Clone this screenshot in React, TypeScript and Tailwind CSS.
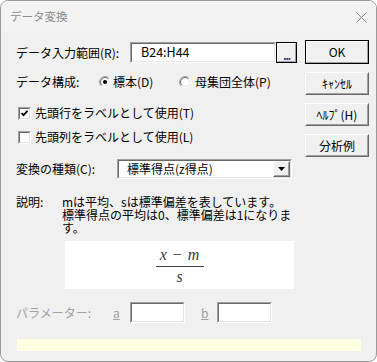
import React from "react";

const F = "font-['Noto_Sans_CJK_JP','Noto_Sans_CJK_SC',sans-serif]";

function Raised({
  children,
  className = "",
  isDefault = false,
}: {
  children?: React.ReactNode;
  className?: string;
  isDefault?: boolean;
}) {
  if (isDefault) {
    return (
      <div className={`border border-black ${className}`}>
        <div className="w-full h-full border-t border-l border-t-white border-l-white border-b border-r border-b-[#a0a0a0] border-r-[#a0a0a0] bg-[#f0f0f0] flex items-center justify-center">
          {children}
        </div>
      </div>
    );
  }
  return (
    <div
      className={`border-t border-l border-t-white border-l-white border-b border-r border-b-[#696969] border-r-[#696969] ${className}`}
    >
      <div className="w-full h-full border-t border-l border-t-[#f0f0f0] border-l-[#f0f0f0] border-b border-r border-b-[#a0a0a0] border-r-[#a0a0a0] bg-[#f0f0f0] flex items-center justify-center">
        {children}
      </div>
    </div>
  );
}

function Sunken({
  children,
  className = "",
}: {
  children?: React.ReactNode;
  className?: string;
}) {
  return (
    <div
      className={`border-t border-l border-t-[#a0a0a0] border-l-[#a0a0a0] border-b border-r border-b-white border-r-white ${className}`}
    >
      <div className="w-full h-full border-t border-l border-t-[#696969] border-l-[#696969] border-b border-r border-b-[#e3e3e3] border-r-[#e3e3e3] bg-white flex items-center">
        {children}
      </div>
    </div>
  );
}

function Radio({ checked }: { checked?: boolean }) {
  const a = (r: number) => {
    const d = r * 0.7071;
    return {
      tl: `M ${6 - d} ${6 + d} A ${r} ${r} 0 0 1 ${6 + d} ${6 - d}`,
      br: `M ${6 + d} ${6 - d} A ${r} ${r} 0 0 1 ${6 - d} ${6 + d}`,
    };
  };
  const o = a(5.5);
  const i = a(4.5);
  return (
    <svg width="12" height="12" viewBox="0 0 12 12" className="shrink-0">
      <circle cx="6" cy="6" r="4.5" fill="#ffffff" />
      <path d={o.tl} stroke="#a0a0a0" fill="none" strokeWidth="1" />
      <path d={o.br} stroke="#ffffff" fill="none" strokeWidth="1" />
      <path d={i.tl} stroke="#696969" fill="none" strokeWidth="1" />
      <path d={i.br} stroke="#e3e3e3" fill="none" strokeWidth="1" />
      {checked && <circle cx="6" cy="6" r="2" fill="#000" />}
    </svg>
  );
}

function Checkbox({ checked }: { checked?: boolean }) {
  return (
    <Sunken className="w-[13px] h-[13px] shrink-0">
      {checked && (
        <svg width="9" height="9" viewBox="0 0 9 9" className="block">
          <polyline
            points="1.5,4 3.5,6.2 7.5,1.8"
            fill="none"
            stroke="#000"
            strokeWidth="1.8"
          />
        </svg>
      )}
    </Sunken>
  );
}

export default function App() {
  return (
    <div className={`w-[377px] h-[362px] bg-white ${F} text-[12px] leading-none text-black`}>
      <div className="w-[377px] h-[362px] rounded-[8px] border border-[#9a9a9a] bg-[#f0f0f0] overflow-hidden flex flex-col">
        {/* title bar */}
        <div className="h-[31px] shrink-0 bg-[#f3f3f3] flex items-center justify-between pl-[9px] pr-[9px]">
          <span className="text-[11.5px] text-[#8a8a8a] mt-[1px]">データ変換</span>
          <svg width="11" height="11" viewBox="0 0 11 11" className="mt-[1px]">
            <path d="M0.5 0.5 L10.5 10.5 M10.5 0.5 L0.5 10.5" stroke="#7a7a7a" strokeWidth="0.9" />
          </svg>
        </div>

        {/* body */}
        <div className="flex-1 pl-[15px] pr-[7px] flex flex-col">
          <div className="flex items-start">
            {/* left column */}
            <div className="w-[282px] flex flex-col">
              <div className="mt-[10px] h-[21px] flex items-center">
                <span className="w-[114px]">データ入力範囲(R):</span>
                <Sunken className="w-[146px] h-[21px]">
                  <span className="pl-[9px] text-[12.5px]">B24:H44</span>
                </Sunken>
                <Raised isDefault className="w-[21px] h-[21px]">
                  <span className="text-[10px] text-[#1a1a6e] mt-[6px] tracking-[-1px] font-bold">...</span>
                </Raised>
              </div>

              <div className="mt-[9px] h-[20px] flex items-center">
                <span className="w-[83px]">データ構成:</span>
                <div className="w-[80px] flex items-center">
                  <Radio checked />
                  <span className="ml-[2px]">標本(D)</span>
                </div>
                <div className="flex items-center">
                  <Radio />
                  <span className="ml-[4px]">母集団全体(P)</span>
                </div>
              </div>

              <div className="mt-[11px] h-[20px] flex items-center pl-[2px]">
                <Checkbox checked />
                <span className="ml-[4px]">先頭行をラベルとして使用(T)</span>
              </div>

              <div className="mt-[4px] h-[20px] flex items-center pl-[2px]">
                <Checkbox />
                <span className="ml-[4px]">先頭列をラベルとして使用(L)</span>
              </div>

              <div className="mt-[12px] h-[20px] flex items-center">
                <span className="w-[101px]">変換の種類(C):</span>
                <Sunken className="w-[175px] h-[20px]">
                  <div className="flex-1 pl-[8px]">標準得点(z得点)</div>
                  <Raised className="w-[17px] h-full">
                    <svg width="7" height="4" viewBox="0 0 7 4">
                      <polygon points="0,0 7,0 3.5,4" fill="#000" />
                    </svg>
                  </Raised>
                </Sunken>
              </div>

              <div className="mt-[16px] flex">
                <span className="w-[46px] leading-[13px]">説明:</span>
                <div className="flex-1 leading-[13px]">
                  mは平均、sは標準偏差を表しています。
                  <br />
                  標準得点の平均は0、標準偏差は1になりま
                  <br />
                  す。
                </div>
              </div>

              <div className="mt-[7px] ml-[49px] w-[229px] h-[48px] bg-white flex flex-col items-center justify-center font-['Liberation_Serif',serif] text-[#3a3a3a]">
                <div className="text-[16px] leading-none h-[17px] flex items-center">
                  <span className="italic">x</span>
                  <span className="mx-[6px]">−</span>
                  <span className="italic">m</span>
                </div>
                <div className="w-[48px] border-t border-[#444] mt-[2px] mb-[3px]" />
                <div className="text-[16px] leading-none h-[14px] flex items-center italic">s</div>
              </div>
            </div>

            {/* right column */}
            <div className="ml-[7px] w-[64px] mt-[8px] flex flex-col gap-[8px]">
              <Raised isDefault className="h-[24px]">
                <span>OK</span>
              </Raised>
              <Raised className="h-[23px]">
                <span>ｷｬﾝｾﾙ</span>
              </Raised>
              <Raised className="h-[23px]">
                <span>ﾍﾙﾌﾟ(H)</span>
              </Raised>
              <Raised className="h-[23px]">
                <span>分析例</span>
              </Raised>
            </div>
          </div>

          <div className="mt-[13px] h-[21px] flex items-center text-[#a0a0a0]">
            <span className="w-[97px]">パラメーター:</span>
            <span className="w-[17px] underline">a</span>
            <Sunken className="w-[55px] h-[21px]" />
            <span className="ml-[16px] w-[16px] underline">b</span>
            <Sunken className="w-[55px] h-[21px]" />
          </div>

          <div className="mt-[16px] ml-[1px] w-[344px] h-[12px] bg-[#ffffe1]" />
        </div>
      </div>
    </div>
  );
}
